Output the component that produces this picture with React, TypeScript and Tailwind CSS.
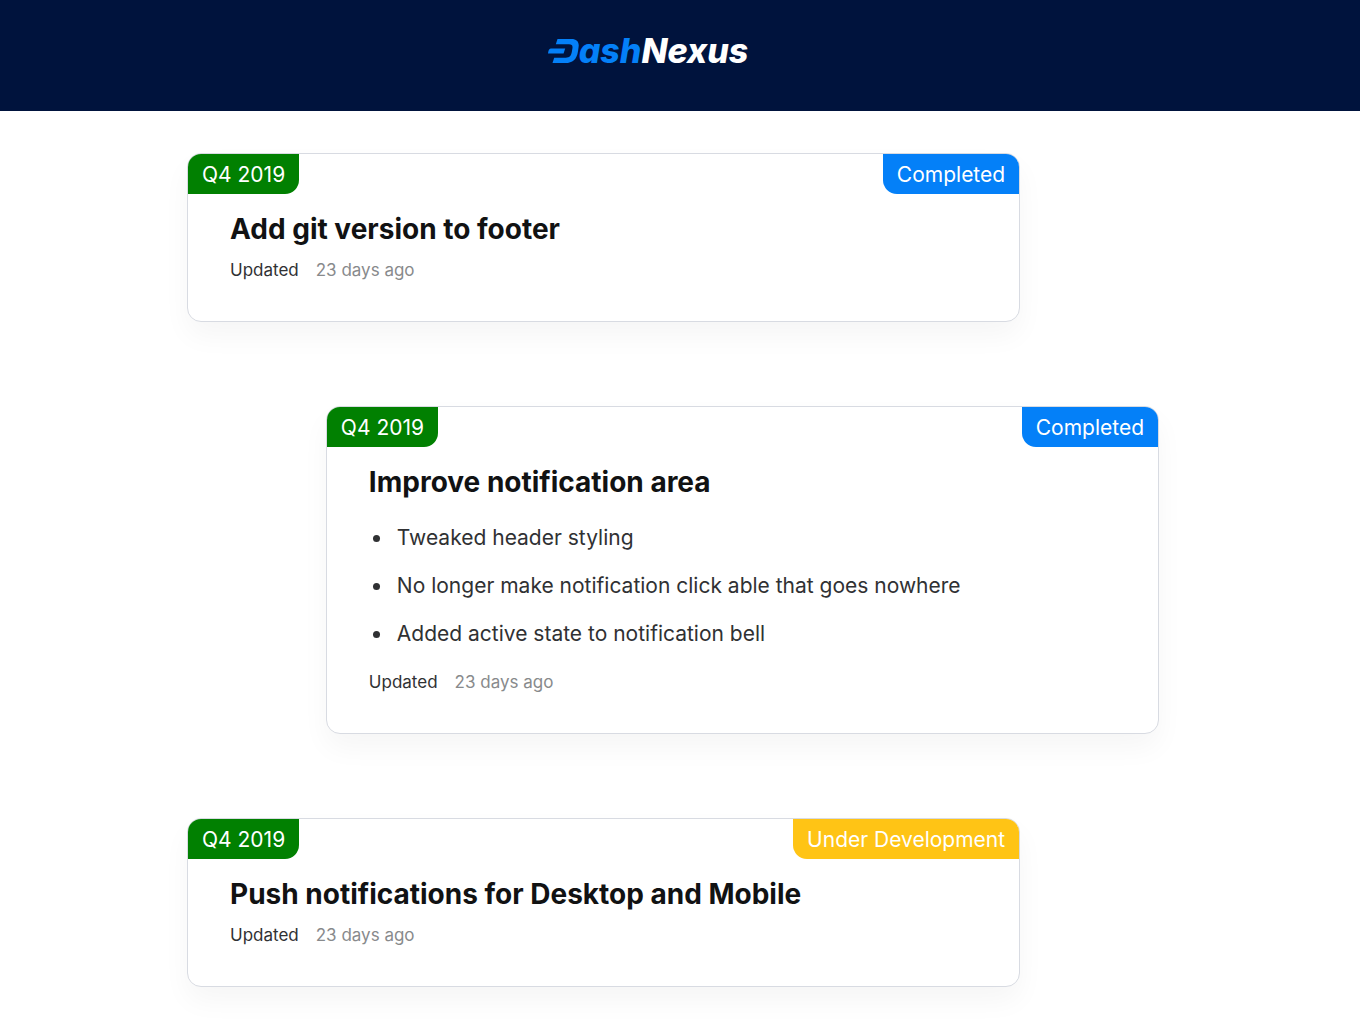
type Status = 'completed' | 'development';

interface RoadmapItem {
  quarter: string;
  status: Status;
  title: string;
  points: string[];
  updated: string;
}

const items: RoadmapItem[] = [
  { quarter: 'Q4 2019', status: 'completed', title: 'Add git version to footer', points: [], updated: '23 days ago' },
  {
    quarter: 'Q4 2019',
    status: 'completed',
    title: 'Improve notification area',
    points: [
      'Tweaked header styling',
      'No longer make notification click able that goes nowhere',
      'Added active state to notification bell',
    ],
    updated: '23 days ago',
  },
  {
    quarter: 'Q4 2019',
    status: 'development',
    title: 'Push notifications for Desktop and Mobile',
    points: [],
    updated: '23 days ago',
  },
];

const statusLabel: Record<Status, string> = {
  completed: 'Completed',
  development: 'Under Development',
};

const statusColor: Record<Status, string> = {
  completed: 'bg-[#0480f8]',
  development: 'bg-[#ffc415]',
};

function Logo() {
  return (
    <div className="flex items-center">
      <svg width="31" height="26" viewBox="0 0 31 26" className="shrink-0 fill-[#0480f8]" aria-hidden="true">
        <path d="M9.5 1H23.5C28.8 1 31.4 4 30.6 9L30 13.2C28.8 21.5 24.5 25 17.5 25H4.5L6.2 19.8H17.8C21.3 19.8 23.2 18 23.9 13.6L24.4 10.5C24.9 7.4 23.9 6.2 21 6.2H7.8Z" />
        <path d="M2.8 10.5H17.2L15.6 15.5H0C.3 12.6 1 11 2.8 10.5Z" />
      </svg>
      <span className="text-[34px] leading-9 font-extrabold text-white italic">
        <span className="text-[#0480f8]">ash</span>Nexus
      </span>
    </div>
  );
}

function RoadmapCard({ item, shifted }: { item: RoadmapItem; shifted: boolean }) {
  return (
    <article
      className={`w-6/7 overflow-hidden rounded-[14px] border border-[#d8dbe2] bg-white pb-[39px] shadow-[0_14px_28px_rgba(0,0,0,0.04)] ${shifted ? 'self-end' : 'self-start'}`}
    >
      <div className="flex items-start justify-between text-[21px] leading-[38px] text-white">
        <span className="rounded-br-[14px] bg-[#018001] px-3.5 pt-0.5">{item.quarter}</span>
        <span className={`rounded-bl-[14px] px-3.5 pt-0.5 ${statusColor[item.status]}`}>
          {statusLabel[item.status]}
        </span>
      </div>
      <div className="px-[42px] pt-[17px]">
        <h2 className="text-[28px] leading-9 font-bold text-[#111213]">{item.title}</h2>
        {item.points.length > 0 && (
          <ul className="mt-[22px] mb-5 space-y-4 text-[21px] leading-8 text-[#303133]">
            {item.points.map((point) => (
              <li
                key={point}
                className="flex items-center pl-1 before:mr-[17px] before:size-[7px] before:shrink-0 before:rounded-full before:bg-[#303133] before:content-['']"
              >
                {point}
              </li>
            ))}
          </ul>
        )}
        <p className="mt-[11px] flex gap-[17px] text-[17px] leading-6">
          <span className="text-[#303133]">Updated</span>
          <time className="text-[#888a8c]">{item.updated}</time>
        </p>
      </div>
    </article>
  );
}

export default function App() {
  return (
    <div className="min-h-screen bg-white font-['Inter',sans-serif]">
      <header className="flex justify-center bg-[#00133d] px-8 pt-[33px] pb-[42px]">
        <a href="#" aria-label="DashNexus" className="mr-16">
          <Logo />
        </a>
      </header>
      <main className="mr-3.5 px-8 pt-[42px]">
        <div className="mx-auto flex max-w-[972px] flex-col gap-[84px]">
          {items.map((item, i) => (
            <RoadmapCard key={item.title} item={item} shifted={i % 2 === 1} />
          ))}
        </div>
      </main>
    </div>
  );
}
